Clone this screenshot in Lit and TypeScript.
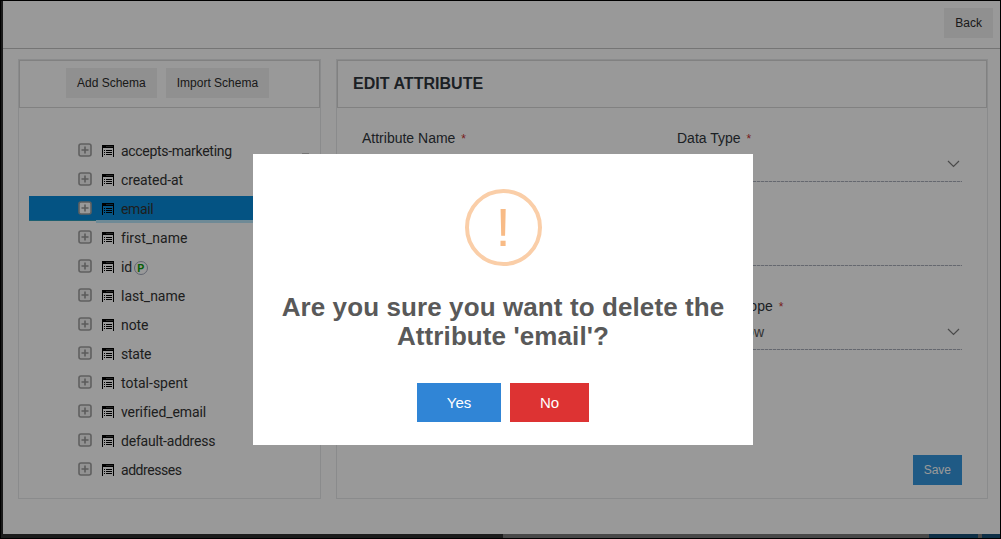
import { LitElement, html, css } from "lit";
import { customElement } from "lit/decorators.js";
import { styleMap } from "lit/directives/style-map.js";

const plusIcon = html`<svg class="plus" width="14" height="14" viewBox="0 0 14 14">
  <rect class="plus-box" x="1" y="1" width="12" height="12" rx="2" stroke="#a0a0a0" stroke-width="1.6" />
  <path d="M7 3.5v7M3.5 7h7" stroke="#999" stroke-width="1.6" />
</svg>`;
const listIcon = html`<svg class="list" width="12" height="12" viewBox="0 0 12 12" shape-rendering="crispEdges">
  <path d="M0 0h12v12h-1V3H1v9H0z" fill="#000" />
  <path class="slot" d="M4 1h7v1H4z" />
  <path d="M2 5h1v1H2zM4 5h6v1H4zM2 7h1v1H2zM4 7h6v1H4zM2 9h1v1H2zM4 9h6v1H4z" fill="#000" />
</svg>`;
const chevron = html`<svg class="chev" width="13" height="8" viewBox="0 0 13 8">
  <path d="M1 1l5.5 5.5L12 1" fill="none" stroke="#7c7c7c" stroke-width="1.2" />
</svg>`;

interface Attribute { name: string; tracking: number; }

const attributes: Attribute[] = [
  { name: "accepts-marketing", tracking: -0.3 },
  { name: "created-at", tracking: -0.1 },
  { name: "email", tracking: -0.35 },
  { name: "first_name", tracking: 0.03 },
  { name: "id", tracking: -0.2 },
  { name: "last_name", tracking: 0 },
  { name: "note", tracking: -0.1 },
  { name: "state", tracking: -0.25 },
  { name: "total-spent", tracking: 0 },
  { name: "verified_email", tracking: -0.08 },
  { name: "default-address", tracking: -0.2 },
  { name: "addresses", tracking: -0.45 },
];

@customElement("app-root")
export class AppRoot extends LitElement {
  static styles = css`
    :host { display: block; width: 1001px; height: 539px; position: relative; overflow: hidden; background: #000; font-family: "Liberation Sans", Arial, sans-serif; color: #30363c; }
    * { box-sizing: border-box; }
    .frame { height: 539px; padding: 1px; display: flex; flex-direction: column; }
    .page { height: 533px; border-left: 2px solid #2a2a2a; background: #fff; display: flex; flex-direction: column; }
    .top { height: 48px; border-bottom: 1px solid #c4c4c4; display: flex; justify-content: flex-end; padding: 7px 7px 0 0; }
    .btn { height: 30px; border: 0; background: #f0f0f0; color: #2c2c2c; font: 12px "Liberation Sans", Arial, sans-serif; padding: 0 11px; line-height: 30px; white-space: nowrap; }
    .strip { height: 4px; display: flex; }
    .s1 { width: 502px; background: #303030; }
    .s2 { width: 426px; background: #7b7b7b; }
    .s3 { width: 49px; background: #184f76; }
    .s4 { width: 4px; background: #7b7b7b; }
    .s5 { flex: 1; background: #184f76; }
    .main { display: flex; gap: 15px; padding: 10px 12px 0 15px; }
    .panel { height: 440px; border: 1px solid #e6e8ea; }
    .left { width: 303px; }
    .right { width: 652px; }
    .head { height: 48px; border: 1px solid #d8d8d8; display: flex; align-items: center; }
    .left .head { padding: 0 0 2px 46px; gap: 9px; }
    .right .head { padding: 0 15px; font-size: 16px; font-weight: bold; letter-spacing: .03px; }
    .tree { padding: 28px 0 0 10px; }
    .row { height: 29px; display: flex; align-items: center; padding-left: 49px; font: 14px Roboto, sans-serif; position: relative; color: #333; }
    .sel::before { content: ""; position: absolute; left: 0; right: 0; top: 2px; height: 24px; background: #088bda; border-bottom: 1px solid #2f9fbd; }
    .sel::after { content: ""; position: absolute; left: 67px; right: 0; top: 26px; height: 3px; background: #b9e6fa; }
    .plus { position: relative; left: -.5px; top: -1px; z-index: 1; }
    .plus-box { fill: #f4f4f4; }
    .slot { fill: #444; }
    .sel .plus-box { fill: #fff; }
    .sel .slot { fill: #05436b; }
    .list { margin: 0 7px 0 10px; z-index: 1; }
    .name { z-index: 1; }
    .badge { width: 14px; height: 14px; margin: 2px 0 0 2px; border: 1px solid #a3a9bb; border-radius: 50%; background: #fff; color: #0a9f0a; font: bold 11px/13px Roboto, sans-serif; text-align: center; }
    .form { display: grid; grid-template-columns: 285px 285px; column-gap: 30px; padding: 22px 25px 0; }
    .field { height: 84px; display: flex; flex-direction: column; font-size: 14px; }
    .label { height: 17px; line-height: 17px; }
    .req { color: #c93030; font-size: 12px; margin-left: 2px; }
    .value { height: 35px; display: flex; align-items: center; justify-content: space-between; padding: 0 2px 1px 3px; color: #555; background: repeating-linear-gradient(to right, #a9adba 0 3px, #e4e5ea 3px 4px) bottom / 100% 1px no-repeat; }
    .actions { display: flex; justify-content: flex-end; padding: 73px 25px 0; }
    .save { background: #3496de; color: #fff; }
    .nub { position: absolute; left: 302px; top: 153px; width: 7px; height: 3px; background: #c4c4c4; }
    .shade { position: absolute; inset: 0; background: rgba(0, 0, 0, .4); z-index: 5; }
    .modal { position: absolute; left: 253px; top: 154px; width: 500px; height: 291px; background: #fff; z-index: 6; display: flex; flex-direction: column; align-items: center; padding-top: 35px; }
    .warn { width: 77px; height: 77px; border: 4px solid #facea8; border-radius: 50%; color: #f8bb86; font-size: 53px; line-height: 70px; text-align: center; }
    .title { margin: 27px 0 0; font-size: 26px; letter-spacing: .1px; line-height: 29px; font-weight: bold; color: #595959; text-align: center; width: 460px; }
    .choices { display: flex; gap: 9px; margin-top: 32px; }
    .choice { height: 39px; border: 0; color: #fff; font: 15px "Liberation Sans", Arial, sans-serif; padding: 0; }
    .yes { width: 84px; background: #3085d6; }
    .no { width: 79px; background: #dd3333; }
  `;

  field(label: string, value = "", arrow = false) {
    return html`<div class="field">
      <div class="label">${label}${label ? html` <span class="req">*</span>` : ""}</div>
      <div class="value"><span>${value}</span>${arrow ? chevron : ""}</div>
    </div>`;
  }

  row({ name, tracking }: Attribute) {
    return html`<div class="row ${name === "email" ? "sel" : ""}">
      ${plusIcon}${listIcon}<span class="name" style=${styleMap({ letterSpacing: `${tracking}px` })}>${name}</span>
      ${name === "id" ? html`<span class="badge">P</span>` : ""}
    </div>`;
  }

  render() {
    return html`
      <div class="frame">
        <div class="page">
          <div class="top"><button class="btn">Back</button></div>
          <div class="main">
            <div class="panel left">
              <div class="head"><button class="btn">Add Schema</button><button class="btn">Import Schema</button></div>
              <div class="tree">${attributes.map((a) => this.row(a))}</div>
            </div>
            <div class="panel right">
              <div class="head">EDIT ATTRIBUTE</div>
              <div class="form">
                ${this.field("Attribute Name")}${this.field("Data Type", "", true)}
                ${this.field("")}${this.field("")}
                ${this.field("")}${this.field("Attribute Scope", "Process Flow", true)}
              </div>
              <div class="actions"><button class="btn save">Save</button></div>
            </div>
          </div>
        </div>
        <div class="strip"><i class="s1"></i><i class="s2"></i><i class="s3"></i><i class="s4"></i><i class="s5"></i></div>
      </div>
      <div class="nub"></div>
      <div class="shade"></div>
      <div class="modal">
        <div class="warn">!</div>
        <h2 class="title">Are you sure you want to delete the Attribute 'email'?</h2>
        <div class="choices"><button class="choice yes">Yes</button><button class="choice no">No</button></div>
      </div>`;
  }
}
